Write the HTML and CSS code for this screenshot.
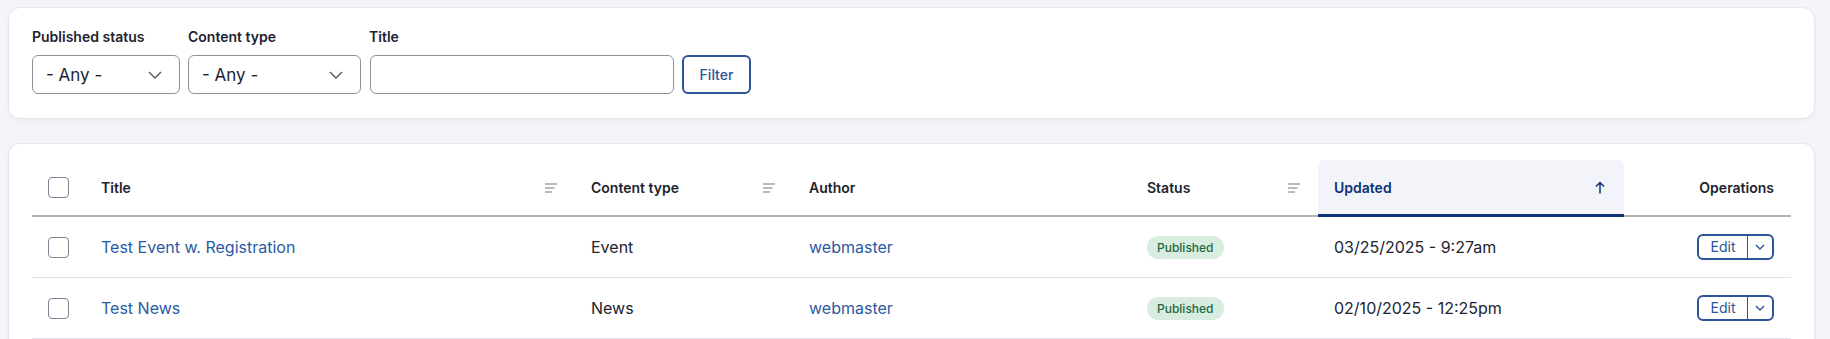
FILE: index.html
```html
<!DOCTYPE html>
<html lang="en">

<head>
    <meta charset="utf-8">
    <meta name="viewport" content="width=device-width, initial-scale=1.0">
    <title>Content</title>
    <link rel="stylesheet" href="styles.css">
</head>

<body>
    <form class="card filters">
        <div class="field">
            <label>Published status</label>
            <div class="select status-select">
                <span>- Any -</span>
                <svg width="14" height="8" viewBox="0 0 14 8"><path d="M1 1l6 6 6-6" fill="none" stroke="#55565e" stroke-width="1.4"/></svg>
            </div>
        </div>
        <div class="field">
            <label>Content type</label>
            <div class="select type-select">
                <span>- Any -</span>
                <svg width="14" height="8" viewBox="0 0 14 8"><path d="M1 1l6 6 6-6" fill="none" stroke="#55565e" stroke-width="1.4"/></svg>
            </div>
        </div>
        <div class="field">
            <label>Title</label>
            <div class="text-input"></div>
        </div>
        <button type="button" class="filter-btn">Filter</button>
    </form>

    <main class="card listing">
        <table>
            <colgroup>
                <col class="c-check">
                <col class="c-title">
                <col class="c-type">
                <col class="c-author">
                <col class="c-status">
                <col class="c-updated">
                <col class="c-ops">
            </colgroup>
            <thead>
                <tr>
                    <th class="check"><span class="box"></span></th>
                    <th><div class="th-inner">Title <svg class="sort" width="12" height="10" viewBox="0 0 12 10"><path d="M0 1h12M0 5h9.5M0 9h7" stroke="#a3a4a8" stroke-width="1.3"/></svg></div></th>
                    <th><div class="th-inner">Content type <svg class="sort" width="12" height="10" viewBox="0 0 12 10"><path d="M0 1h12M0 5h9.5M0 9h7" stroke="#a3a4a8" stroke-width="1.3"/></svg></div></th>
                    <th>Author</th>
                    <th><div class="th-inner">Status <svg class="sort" width="12" height="10" viewBox="0 0 12 10"><path d="M0 1h12M0 5h9.5M0 9h7" stroke="#a3a4a8" stroke-width="1.3"/></svg></div></th>
                    <th class="active"><div class="th-inner">Updated <svg width="10" height="13" viewBox="0 0 10 13"><path d="M5 12.5V1.5M1 5.5l4-4 4 4" fill="none" stroke="#0e3376" stroke-width="1.5"/></svg></div></th>
                    <th class="ops">Operations</th>
                </tr>
            </thead>
            <tbody>
                <tr>
                    <td class="check"><span class="box"></span></td>
                    <td><a href="#">Test Event w. Registration</a></td>
                    <td>Event</td>
                    <td><a href="#">webmaster</a></td>
                    <td><span class="badge">Published</span></td>
                    <td>03/25/2025 - 9:27am</td>
                    <td class="ops">
                        <div class="edit-group">
                            <span class="edit">Edit</span>
                            <span class="more"><svg width="10" height="6" viewBox="0 0 10 6"><path d="M1 1l4 4 4-4" fill="none" stroke="#2b5499" stroke-width="1.4"/></svg></span>
                        </div>
                    </td>
                </tr>
                <tr>
                    <td class="check"><span class="box"></span></td>
                    <td><a href="#">Test News</a></td>
                    <td>News</td>
                    <td><a href="#">webmaster</a></td>
                    <td><span class="badge">Published</span></td>
                    <td>02/10/2025 - 12:25pm</td>
                    <td class="ops">
                        <div class="edit-group">
                            <span class="edit">Edit</span>
                            <span class="more"><svg width="10" height="6" viewBox="0 0 10 6"><path d="M1 1l4 4 4-4" fill="none" stroke="#2b5499" stroke-width="1.4"/></svg></span>
                        </div>
                    </td>
                </tr>
            </tbody>
        </table>
    </main>
</body></html>
```

FILE: styles.css
```css
* {
    padding: 0;
    margin: 0;
    box-sizing: border-box;
}

body {
    background-color: #f4f5f8;
    font-family: Inter, "Noto Sans", sans-serif;
    color: #222330;
    padding: 7px 15px 0 8px;
}

.card {
    background-color: white;
    border: 1px solid #e6e7ec;
    border-radius: 12px;
    box-shadow: 0 2px 4px rgba(0, 0, 0, 0.04);
}

/* filter form */

.filters {
    display: flex;
    align-items: flex-end;
    gap: 8px;
    padding: 18px 23px 24px;
    height: 112px;
}

.field {
    display: flex;
    flex-direction: column;
}

.field label {
    font-size: 14px;
    font-weight: 600;
    line-height: 20px;
    margin-bottom: 8px;
}

.select {
    display: flex;
    align-items: center;
    justify-content: space-between;
    height: 39px;
    border: 1px solid #8e929c;
    border-radius: 6px;
    padding: 0 17px 0 13px;
    font-size: 17px;
    color: #222330;
}

.status-select {
    width: 148px;
}

.type-select {
    width: 173px;
}

.text-input {
    width: 304px;
    height: 39px;
    border: 1px solid #8e929c;
    border-radius: 6px;
    margin-left: 1px;
}

.filter-btn {
    width: 69px;
    height: 39px;
    border: 2px solid #2b5499;
    border-radius: 6px;
    background-color: white;
    color: #2b5499;
    font-family: Inter, "Noto Sans", sans-serif;
    font-size: 14px;
    font-weight: 500;
}

/* listing */

.listing {
    margin-top: 24px;
    padding: 16px 23px 0;
    height: 200px;
    border-bottom: none;
    border-radius: 12px 12px 0 0;
}

table {
    width: 100%;
    table-layout: fixed;
    border-collapse: separate;
    border-spacing: 0;
}

.c-check { width: 53px; }
.c-title { width: 490px; }
.c-type { width: 218px; }
.c-author { width: 338px; }
.c-status { width: 187px; }
.c-updated { width: 306px; }
.c-ops { width: 167px; }

th {
    height: 57px;
    text-align: left;
    font-size: 14px;
    font-weight: 600;
    color: #222330;
    padding: 0 16px 0 16px;
    border-bottom: 2px solid #b3b3b5;
}

.th-inner {
    display: flex;
    align-items: center;
    justify-content: space-between;
}

.sort {
    margin-right: 2px;
}

th.active {
    background-color: #f3f4f9;
    color: #0e3376;
    border-bottom: 3px solid #0e3376;
    border-radius: 6px 6px 0 0;
    padding-top: 1px;
}

th.active .th-inner {
    padding-right: 3px;
}

td {
    height: 61px;
    font-size: 16px;
    color: #222330;
    padding: 0 16px;
    border-bottom: 1px solid #e1e1e5;
}

td a {
    color: #2b5aa3;
    text-decoration: none;
}

.ops {
    text-align: right;
    padding-right: 17px;
}

.check {
    padding-left: 16px;
    padding-right: 0;
}

.box {
    display: block;
    width: 21px;
    height: 21px;
    border: 1px solid #7d8391;
    border-radius: 4px;
}

.badge {
    display: inline-block;
    padding: 0 10px;
    height: 23px;
    line-height: 23px;
    border-radius: 12px;
    background-color: #d8ede0;
    color: #1e6841;
    font-size: 12px;
    font-weight: 500;
}

.edit-group {
    display: inline-flex;
    height: 26px;
    border: 2px solid #2b5499;
    border-radius: 6px;
    vertical-align: middle;
}

.edit {
    width: 49px;
    line-height: 22px;
    text-align: center;
    font-size: 14px;
    color: #2b5499;
    border-right: 1.5px solid #2b5499;
}

.more {
    display: flex;
    align-items: center;
    justify-content: center;
    width: 24px;
}
```
